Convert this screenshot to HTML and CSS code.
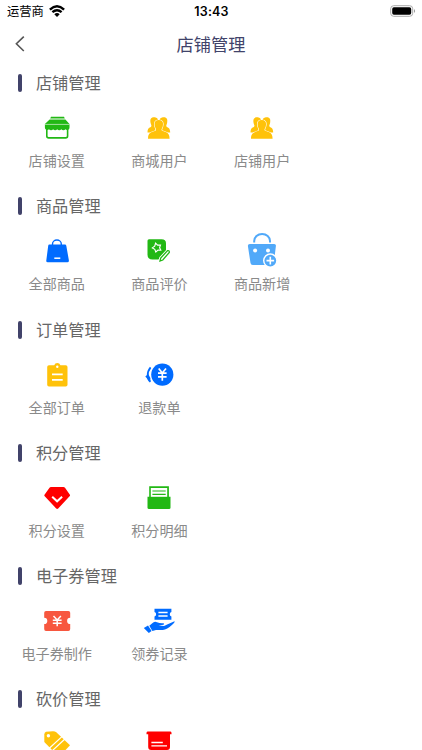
FILE: index.html
```
<!DOCTYPE html>
<html lang="zh-CN">
<head>
<meta charset="utf-8">
<title>店铺管理</title>
<link rel="stylesheet" href="styles.css">
</head>
<body>
<div class="status">
  <div class="carrier">运营商
    <svg class="wifi" width="16" height="12" viewBox="0 0 16 12" fill="none" stroke="#000" stroke-width="2.4"><path d="M.9 4.6Q8-1.9 15.1 4.6M3.4 7.2Q8 3.2 12.6 7.2"/><path d="M5.3 9.2Q8 7 10.7 9.2L8 12Z" fill="#000" stroke="none"/></svg>
  </div>
  <div class="time">13:43</div>
  <svg class="battery" width="26" height="12" viewBox="0 0 26 12"><rect x=".7" y=".7" width="22" height="10.6" rx="3" fill="#fff" stroke="#aaa"/><rect x="2.2" y="2.2" width="19" height="7.6" rx="1.7"/><path d="M24 4Q26.2 6 24 8Z" fill="#999"/></svg>
</div>
<header class="nav">
  <svg class="back" width="12" height="18" viewBox="0 0 12 18" fill="none" stroke="#555" stroke-width="1.6"><path d="M9.8 1.6L2.4 8.8L9.8 16"/></svg>
  <h1>店铺管理</h1>
</header>
<main>
  <section>
    <h2><span>店铺管理</span></h2>
    <div class="grid">
      <div class="item">
        <svg class="icon green" viewBox="0 0 32 32"><path d="M10 4.7H23L23.8 6.5H9.2ZM8.6 7.4H24.4L28.5 12V15.5A2.4 2.4 0 0 1 24.4 17.3A2.7 2.7 0 0 1 20.3 17.3A2.7 2.7 0 0 1 16.2 17.3A2.7 2.7 0 0 1 12.1 17.3A2.7 2.7 0 0 1 8 17.3A2.4 2.4 0 0 1 3.9 15.5V12Z"/><path d="M4 12.4H28.5" stroke="#fff" stroke-width=".6"/><path d="M5.8 17V24Q5.8 25.9 7.7 25.9H24.7Q26.6 25.9 26.6 24V17" fill="none" stroke="#22b814" stroke-width="1.6"/></svg>
        <span>店铺设置</span>
      </div>
      <div class="item">
        <svg class="icon yellow" viewBox="0 0 32 32"><path d="M11.2 5.3C7.3 5.3 7 8 7.6 11C8 13 8.8 13.4 8.2 14.5C7.4 15.8 4.5 15 4.5 20.5H12L15.3 9C15 6 13 5.3 11.2 5.3Z"/><path d="M20.5 5.3C24.4 5.3 24.7 8 24.1 11C23.7 13 22.9 13.4 23.5 14.5C24.3 15.8 27.2 15 27.2 20.5H19.7L16.4 9C16.7 6 18.7 5.3 20.5 5.3Z"/><path class="person" d="M15.8 8C11.6 8 11.1 11 11.9 14.4C12.4 16 13.6 17.4 12.8 18.6C11.2 20.2 5 18.8 5 26.8H26.6C26.6 18.8 20.4 20.2 18.8 18.6C18 17.4 19.2 16 19.7 14.4C20.5 11 20 8 15.8 8Z"/></svg>
        <span>商城用户</span>
      </div>
      <div class="item">
        <svg class="icon yellow" viewBox="0 0 32 32"><path d="M11.2 5.3C7.3 5.3 7 8 7.6 11C8 13 8.8 13.4 8.2 14.5C7.4 15.8 4.5 15 4.5 20.5H12L15.3 9C15 6 13 5.3 11.2 5.3Z"/><path d="M20.5 5.3C24.4 5.3 24.7 8 24.1 11C23.7 13 22.9 13.4 23.5 14.5C24.3 15.8 27.2 15 27.2 20.5H19.7L16.4 9C16.7 6 18.7 5.3 20.5 5.3Z"/><path class="person" d="M15.8 8C11.6 8 11.1 11 11.9 14.4C12.4 16 13.6 17.4 12.8 18.6C11.2 20.2 5 18.8 5 26.8H26.6C26.6 18.8 20.4 20.2 18.8 18.6C18 17.4 19.2 16 19.7 14.4C20.5 11 20 8 15.8 8Z"/></svg>
        <span>店铺用户</span>
      </div>
    </div>
  </section>
  <section>
    <h2><span>商品管理</span></h2>
    <div class="grid">
      <div class="item">
        <svg class="icon blue" viewBox="0 0 32 32"><path d="M8.2 9.5H24Q25 9.5 25.3 10.7L27.9 25.5Q28 27.2 26.4 27.2H6.8Q5 27.2 5.3 25.5L7.2 10.7Q7.4 9.5 8.2 9.5Z"/><path d="M11.5 11V9A4.2 3.8 0 0 1 20.3 9V11" fill="none" stroke="#006bff" stroke-width="1.4"/><path d="M13.3 23.2H19.3" stroke="#fff" stroke-width="1.5"/></svg>
        <span>全部商品</span>
      </div>
      <div class="item">
        <svg class="icon green" viewBox="0 0 32 32"><path d="M6 4.3H18.5Q23 4.3 23 8.5V17L15.5 24.5H9.5Q4.5 24.5 4.5 19.5V5.8Q4.5 4.3 6 4.3Z"/><path d="M12.6 8.1L14.6 10.1L17.5 10L16.6 12.6L17.8 15.2L15 15.1L12.8 17L11.8 14.3L9.3 12.9L11.7 11.2Z" fill="none" stroke="#fff" stroke-width="1.1"/><path d="M24.6 15.6L26.5 17.4L19.8 25L17 26L17.7 23Z" fill="#fff" stroke="#fff" stroke-width="3"/><path d="M24.6 15.6Q26.6 15.2 26.3 17.4L19.8 25L17 26L17.7 23Z" fill="#fff" stroke="#22b814" stroke-width="1.3"/></svg>
        <span>商品评价</span>
      </div>
      <div class="item">
        <svg class="icon sky" viewBox="0 0 32 32"><path d="M8.2 7.5V6A7.9 7.1 0 0 1 24 6V7.5" fill="none" stroke="#51a9f9" stroke-width="2"/><path d="M3.8 9H28.2Q30.2 9 29.9 11L27.8 28Q27.5 30 25.5 30H6.8Q4.8 30 4.5 28L1.9 11Q1.7 9 3.8 9Z"/><g fill="#fff"><circle cx="9.1" cy="15.6" r="2"/><circle cx="22" cy="15.6" r="2"/></g><circle cx="24.3" cy="25.6" r="6.6" stroke="#fff" stroke-width="1.4"/><path d="M24.3 21.8V29.4M20.5 25.6H28.1" stroke="#fff" stroke-width="1.6"/></svg>
        <span>商品新增</span>
      </div>
    </div>
  </section>
  <section>
    <h2><span>订单管理</span></h2>
    <div class="grid">
      <div class="item">
        <svg class="icon yellow" viewBox="0 0 32 32"><path d="M8 6.2H13.2A3.3 3.3 0 0 1 19.4 6.2H24.7Q26.5 6.2 26.5 8V25.7Q26.5 27.5 24.7 27.5H8Q6.2 27.5 6.2 25.7V8Q6.2 6.2 8 6.2Z"/><circle cx="16.3" cy="7.8" r="1.2" fill="#fff"/><path d="M11 15.4H21.7M11 20.8H21.7" stroke="#fff" stroke-width="1.8"/></svg>
        <span>全部订单</span>
      </div>
      <div class="item">
        <svg class="icon blue" viewBox="0 0 32 32"><circle cx="19.3" cy="15.6" r="11.1"/><path d="M7.6 8.4Q4.6 12 4.7 16.5T7.4 22.8" fill="none" stroke="#006bff" stroke-width="1.8"/><path d="M2.3 17.5L5.2 15L7.4 19V23.2Z"/><path d="M15.7 9.5L19.3 14L23 9.5M19.3 14V21.7M15 14.2H23.6M15 17.9H23.6" fill="none" stroke="#fff" stroke-width="1.7"/></svg>
        <span>退款单</span>
      </div>
    </div>
  </section>
  <section>
    <h2><span>积分管理</span></h2>
    <div class="grid">
      <div class="item">
        <svg class="icon red" viewBox="0 0 32 32"><path d="M10 5.1H22.4Q23.4 5.1 24 5.8L28.9 12.7Q29.3 13.4 28.8 14L17.2 26.6Q16.2 27.5 15.2 26.6L3.5 14Q3 13.3 3.5 12.7L8.5 5.8Q9 5.1 10 5.1Z"/><path d="M11.2 14.7L16.1 19.3L21.1 14.7" fill="none" stroke="#fff" stroke-width="2"/></svg>
        <span>积分设置</span>
      </div>
      <div class="item">
        <svg class="icon green" viewBox="0 0 32 32"><path d="M6.2 4.2H25.9V14.8H27.5V25.8Q27.5 27.1 26 27.1H6Q4.5 27.1 4.5 25.8V14.8H6.2Z"/><path d="M7.8 6H24.2V14.8H7.8Z" fill="#fff"/><path d="M9.4 9H22.7M9.4 12.3H22.7" stroke="#22b814" stroke-width="1.2"/></svg>
        <span>积分明细</span>
      </div>
    </div>
  </section>
  <section>
    <h2><span>电子券管理</span></h2>
    <div class="grid">
      <div class="item">
        <svg class="icon coral" viewBox="0 0 32 32"><path d="M5 6H27.4Q29.2 6 29.2 7.8V12.8A3.1 3.1 0 0 0 29.2 19V24Q29.2 25.9 27.4 25.9H5Q3.2 25.9 3.2 24V19A3.1 3.1 0 0 0 3.2 12.8V7.8Q3.2 6 5 6Z"/><path d="M12.5 11L16.2 14.9L19.9 11M16.2 14.9V21.2M11.8 15.3H20.6M11.8 18.2H20.6" fill="none" stroke="#fff" stroke-width="1.5"/></svg>
        <span>电子券制作</span>
      </div>
      <div class="item">
        <svg class="icon blue" viewBox="0 0 32 32"><path d="M11.5 3.8H28.4V7A2.3 2.3 0 0 0 28.4 11.4V14.8H11.5V11.4A2.3 2.3 0 0 0 11.5 7Z"/><path d="M15.4 7.5H24.6M15.4 11H24.6" stroke="#fff" stroke-width="1.3"/><path d="M6.3 20.7L10.2 17.5Q12 16.3 14 17.2Q17 18.6 20.6 18.2Q21.7 18.7 20.5 19.7L15.5 20.4L21 21Q26.5 18.5 31.5 16.3Q32.3 17.2 29.2 19.8Q24 24.8 19.8 25H13L9.4 26.1Z"/><path d="M.8 22.9L5 20.6L8.6 26.1L5.8 28Z"/></svg>
        <span>领券记录</span>
      </div>
    </div>
  </section>
  <section class="last">
    <h2><span>砍价管理</span></h2>
    <div class="grid">
      <div class="item">
        <svg class="icon yellow" viewBox="0 0 32 32"><path d="M5 3.8L12 3.2Q14 3.2 15.3 4.3L29 17.3L18 29L3.3 14V6.5Q3.4 4.2 5 3.8Z"/><circle cx="7.4" cy="7.8" r="1.7" fill="#fff"/><path d="M22.3 7.4L8.3 20.3M25 10L11 23" stroke="#fff" stroke-width="1.2"/></svg>
      </div>
      <div class="item">
        <svg class="icon red" viewBox="0 0 32 32"><path d="M4.5 3.4H27.5Q28.5 3.4 28.5 5V6.3H27V19Q27 22 24 22H8.2Q5.2 22 5.2 19V6.3H3.5V5Q3.5 3.4 4.5 3.4Z"/><path d="M8.4 14.5H19.8M8.4 17.8H24" stroke="#fff" stroke-width="1.3"/></svg>
      </div>
    </div>
  </section>
</main>
</body>
</html>
```
FILE: styles.css
```
* { box-sizing: border-box; }
body {
  margin: 0;
  background: #fff;
  font-family: "Noto Sans CJK SC", sans-serif;
  font-weight: 300;
}
svg { display: block; flex: none; }
.status {
  display: grid;
  grid-template-columns: 1fr auto 1fr;
  align-items: center;
  height: 22px;
  padding: 0 6px 0 7px;
  color: #000;
}
.carrier {
  display: flex;
  align-items: center;
  gap: 5px;
  font-size: 12.3px;
  font-weight: 400;
  line-height: 22px;
}
.time {
  font-family: Inter, sans-serif;
  font-size: 12.5px;
  font-weight: 600;
  letter-spacing: .15px;
}
.battery { justify-self: end; }
.nav {
  display: grid;
  grid-template-columns: 1fr auto 1fr;
  align-items: center;
  height: 40px;
  padding: 4px 14px 0;
}
.nav h1 {
  margin: 0;
  color: #41436a;
  font-size: 17.2px;
  font-weight: 400;
  line-height: 30px;
}
section { height: 123.2px; }
.last { height: 72px; overflow: hidden; }
h2 {
  display: flex;
  align-items: center;
  gap: 13.5px;
  height: 42.6px;
  margin: 0;
  padding-left: 18px;
  font-size: 16.2px;
  font-weight: 400;
  line-height: 24px;
  color: #666;
}
h2 span { padding-bottom: 2px; }
h2::before {
  content: "";
  width: 4.4px;
  height: 18px;
  border-radius: 2px;
  background: #41436a;
}
.grid {
  display: grid;
  grid-template-columns: repeat(4, 102.7px);
  padding: 7.7px 0 0 5.4px;
}
.item {
  display: flex;
  flex-direction: column;
  align-items: center;
  gap: 5px;
  font-size: 14.1px;
  font-weight: 400;
  line-height: 22px;
  color: #8a8a8a;
}
.icon { width: 32px; height: 32px; overflow: visible; }
.person { stroke: #fff; stroke-width: 1.2; paint-order: stroke; }
.green { fill: #22b814; }
.yellow { fill: #ffc20a; }
.blue { fill: #006bff; }
.sky { fill: #51a9f9; }
.red { fill: #f00; }
.coral { fill: #f7573f; }
```
